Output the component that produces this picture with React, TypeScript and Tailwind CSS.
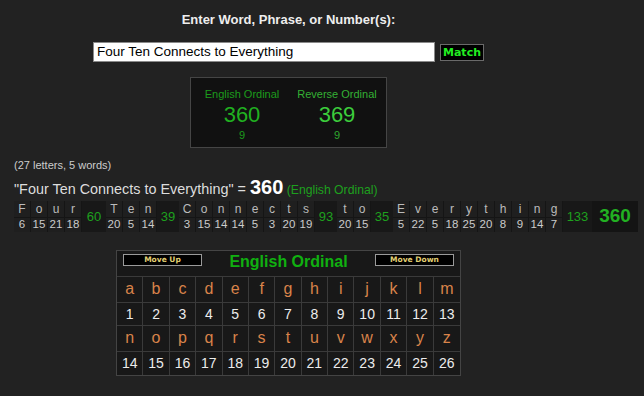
import React from "react";

const words = [
  { w: "Four", v: [6, 15, 21, 18], t: 60, tw: 24 },
  { w: "Ten", v: [20, 5, 14], t: 39, tw: 22 },
  { w: "Connects", v: [3, 15, 14, 14, 5, 3, 20, 19], t: 93, tw: 22 },
  { w: "to", v: [20, 15], t: 35, tw: 22 },
  { w: "Everything", v: [5, 22, 5, 18, 25, 20, 8, 9, 14, 7], t: 133, tw: 29 },
];

const row1 = "abcdefghijklm".split("");
const row2 = "nopqrstuvwxyz".split("");

function TableCell({ children, kind, last }: { children: React.ReactNode; kind: "l" | "n"; last: boolean }) {
  return (
    <div
      className={
        (kind === "l"
          ? "h-[26px] text-[16px] text-[#d9834a] leading-[24px]"
          : "h-[23px] text-[14px] text-[#ececec] leading-[22px]") +
        " flex justify-center border-b border-[#3a3a3a]" +
        (last ? "" : " border-r")
      }
    >
      {children}
    </div>
  );
}

export default function App() {
  return (
    <div className="w-[644px] h-[396px] bg-[#222222] overflow-hidden font-['Liberation_Sans',Arial,sans-serif]">
      <div className="w-[577px] flex flex-col items-center">
        <div className="pt-[12px] text-[13px] font-bold text-[#eeeeee] leading-[15px]">
          Enter Word, Phrase, or Number(s):
        </div>
        <div className="mt-[15px] flex items-start">
          <div className="w-[342px] h-[20px] bg-white border border-[#8a8a8a] pl-[3px] text-[13.5px] leading-[18px] text-black">
            Four Ten Connects to Everything
          </div>
          <div className="ml-[5px] mt-[2px] w-[44px] h-[17px] bg-black border border-[#6a6a6a] flex items-center justify-center font-['DejaVu_Sans',sans-serif] font-bold text-[11px] leading-[13px] text-[#22ee22]">
            Match
          </div>
        </div>
        <div className="mt-[15px] w-[197px] h-[71px] bg-[#111111] border border-[#454545] flex pl-[10px] pt-[10px] gap-[13px]">
          <div className="w-[82px] flex flex-col items-center">
            <div className="text-[11px] leading-[13px] text-[#1c9c1c]">English Ordinal</div>
            <div className="mt-[2px] text-[22px] leading-[24px] text-[#20b020]">360</div>
            <div className="mt-[2px] text-[11px] leading-[13px] text-[#1c9c1c]">9</div>
          </div>
          <div className="w-[82px] flex flex-col items-center">
            <div className="text-[11px] leading-[13px] text-[#34b034]">Reverse Ordinal</div>
            <div className="mt-[2px] text-[22px] leading-[24px] text-[#3ccc3c]">369</div>
            <div className="mt-[2px] text-[11px] leading-[13px] text-[#2ea82e]">9</div>
          </div>
        </div>
      </div>

      <div className="pl-[14px] mt-[11px] text-[11px] leading-[13px] text-[#cccccc]">(27 letters, 5 words)</div>

      <div className="pl-[14px] mt-[5px] h-[20px] leading-[20px] whitespace-nowrap">
        <span className="text-[14.4px] text-[#dddddd]">"Four Ten Connects to Everything" = </span>
        <span className="text-[20px] font-bold text-white">360</span>
        <span className="text-[12.2px] text-[#1ea01e]"> (English Ordinal)</span>
      </div>

      <div className="pl-[14px] mt-[4px] flex h-[31px] whitespace-nowrap">
        {words.map((wd, i) => (
          <React.Fragment key={i}>
            {wd.w.split("").map((ch, j) => (
              <div key={j} className="w-[17px] flex flex-col border-r border-[#151515] bg-[#1f1f1f] shrink-0">
                <div className="h-[17px] border-b border-[#151515] flex justify-center text-[12px] leading-[16px] text-[#bbbbbb]">
                  {ch}
                </div>
                <div className="h-[14px] flex justify-center text-[11.5px] leading-[13px] text-[#cccccc]">
                  {wd.v[j]}
                </div>
              </div>
            ))}
            <div
              className="h-[31px] bg-[#181818] flex items-center justify-center text-[13px] text-[#1ea01e] shrink-0"
              style={{ width: wd.tw }}
            >
              {wd.t}
            </div>
          </React.Fragment>
        ))}
        <div className="w-[46px] h-[31px] bg-[#141414] flex items-center justify-center text-[19px] font-bold text-[#22b022] shrink-0">
          360
        </div>
      </div>

      <div className="ml-[116px] mt-[18px] w-[345px] border border-[#444444] bg-[#181818]">
        <div className="h-[26px] flex items-start justify-between px-[6px] border-b border-[#3a3a3a]">
          <div className="mt-[3px] w-[79px] h-[12px] bg-black border border-[#9a9a9a] flex items-center justify-center font-['DejaVu_Sans',sans-serif] font-bold text-[7.5px] leading-[10px] text-[#e2cf72]">
            Move Up
          </div>
          <div className="mt-[1px] text-[16px] font-bold leading-[20px] text-[#10b010]">English Ordinal</div>
          <div className="mt-[3px] w-[79px] h-[12px] bg-black border border-[#9a9a9a] flex items-center justify-center font-['DejaVu_Sans',sans-serif] font-bold text-[7.5px] leading-[10px] text-[#e2cf72]">
            Move Down
          </div>
        </div>
        <div className="grid grid-cols-[repeat(13,1fr)]">
          {row1.map((c, i) => (
            <TableCell key={"a" + i} kind="l" last={i === 12}>{c}</TableCell>
          ))}
          {row1.map((_, i) => (
            <TableCell key={"b" + i} kind="n" last={i === 12}>{i + 1}</TableCell>
          ))}
          {row2.map((c, i) => (
            <TableCell key={"c" + i} kind="l" last={i === 12}>{c}</TableCell>
          ))}
          {row2.map((_, i) => (
            <div
              key={"d" + i}
              className={
                "h-[23px] text-[14px] text-[#ececec] leading-[22px] flex justify-center border-[#3a3a3a]" +
                (i === 12 ? "" : " border-r")
              }
            >
              {i + 14}
            </div>
          ))}
        </div>
      </div>
    </div>
  );
}
